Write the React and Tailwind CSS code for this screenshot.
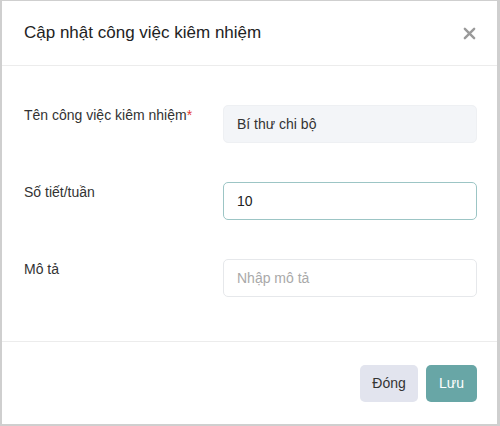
import React, { useState } from 'react'

// Modal: update a concurrent duty (kiêm nhiệm) record
function Field({ label, required, children }) {
    return (
        <div className="flex items-start">
            <div className="w-[199px] shrink-0 text-[14px] leading-[20px] text-[#333]">
                {label}
                {required && <span className="text-[#e53935]">*</span>}
            </div>
            <div className="flex-1">{children}</div>
        </div>
    )
}

export default function App() {
    const [hours, setHours] = useState('10')
    const [desc, setDesc] = useState('')

    return (
        <div className="h-[426px] w-[500px] bg-[#cfcfcf] pl-[2px] pr-[3px] pt-[1px] pb-[2px] font-['Liberation_Sans',Arial,sans-serif]">
            <div className="flex h-full flex-col bg-white">
                <div className="flex h-[65px] items-center justify-between border-b border-[#ececec] pl-[22px] pr-[21px]">
                    <h3 className="text-[17px] text-[#222]">Cập nhật công việc kiêm nhiệm</h3>
                    <button className="text-[#9a9a9a]">
                        <svg width="13" height="13" viewBox="0 0 14 14" fill="none" stroke="currentColor" strokeWidth="2.6" strokeLinecap="round">
                            <path d="M2 2 L12 12 M12 2 L2 12" />
                        </svg>
                    </button>
                </div>

                <div className="flex flex-col gap-[39px] border-b border-[#ececec] pl-[22px] pr-[20px] pt-[39px] pb-[44px]">
                    <Field label="Tên công việc kiêm nhiệm" required>
                        <div className="flex h-[38px] items-center rounded-[5px] border border-[#eef0f3] bg-[#f3f5f8] px-[13px] text-[14px] text-[#333]">
                            Bí thư chi bộ
                        </div>
                    </Field>
                    <Field label="Số tiết/tuần">
                        <input
                            value={hours}
                            onChange={(e) => setHours(e.target.value)}
                            className="h-[38px] w-full rounded-[5px] border border-[#9cc5c5] bg-white px-[13px] text-[14px] text-[#222] outline-none"
                        />
                    </Field>
                    <Field label="Mô tả">
                        <input
                            value={desc}
                            onChange={(e) => setDesc(e.target.value)}
                            placeholder="Nhập mô tả"
                            className="h-[38px] w-full rounded-[5px] border border-[#e6e8eb] bg-white px-[13px] text-[14px] text-[#222] outline-none placeholder:text-[#a9a9a9]"
                        />
                    </Field>
                </div>

                <div className="flex flex-1 items-start justify-end gap-[8px] pr-[20px] pt-[23px]">
                    <button className="h-[37px] w-[58px] rounded-[5px] bg-[#e2e4ee] text-[14px] text-[#333]">Đóng</button>
                    <button className="h-[37px] w-[51px] rounded-[5px] bg-[#68a6a6] text-[14px] text-white">Lưu</button>
                </div>
            </div>
        </div>
    )
}
